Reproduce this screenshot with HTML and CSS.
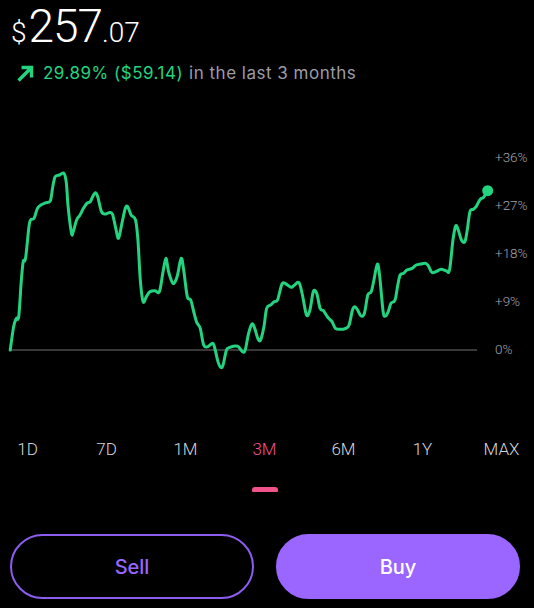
FILE: index.html
```html
<!DOCTYPE html>
<html>
	<head>
		<title>Price chart</title>
		<meta charset="UTF-8"/>
		<link rel="stylesheet" href="styles.css">
	</head>
	<body>
		<div class="price">
			<span class="currency">$</span><span class="whole">257</span><span class="cents">.07</span>
		</div>
		<div class="change">
			<svg class="arrow" width="19" height="19" viewBox="0 0 19 19">
				<path d="M2.5 16.5 L15 4 M5.5 3.5 H15.5 V13.5" fill="none" stroke="#22d47f" stroke-width="3.4"/>
			</svg>
			<span class="gain">29.89% ($59.14)</span>
			<span class="period">in the last 3 months</span>
		</div>
		<div class="chart">
			<svg id="chart" width="534" height="240" viewBox="0 0 534 240">
				<line class="baseline" x1="10" y1="210" x2="477" y2="210"/>
				<text class="axis" x="495" y="18">+36%</text>
				<text class="axis" x="495" y="66">+27%</text>
				<text class="axis" x="495" y="114">+18%</text>
				<text class="axis" x="495" y="162">+9%</text>
				<text class="axis" x="495" y="210">0%</text>
				<path id="line" class="line" d=""/>
				<circle id="dot" class="dot" r="5.5" cx="0" cy="0"/>
			</svg>
		</div>
		<div class="ranges">
			<div class="range">1D</div>
			<div class="range">7D</div>
			<div class="range">1M</div>
			<div class="range active">3M</div>
			<div class="range">6M</div>
			<div class="range">1Y</div>
			<div class="range">MAX</div>
		</div>
		<div class="actions">
			<button class="button sell">Sell</button>
			<button class="button buy">Buy</button>
		</div>
		<script>
			// trace of the line, on a 1568 x 720 grid laid over the chart box
			const trace = [
				[30,630],[40,560],[48,535],[55,530],[62,430],[68,365],[75,355],[85,260],[90,240],[100,235],
				[110,205],[120,195],[135,188],[148,182],[155,140],[162,110],[175,105],[188,100],[195,130],[200,200],
				[210,280],[215,275],[225,240],[235,225],[245,205],[255,190],[265,185],[272,170],[280,158],[287,170],
				[298,215],[310,222],[320,218],[330,222],[340,265],[348,295],[358,250],[368,205],[375,200],[385,225],
				[398,240],[405,300],[412,420],[420,485],[430,470],[440,455],[455,452],[468,455],[478,400],[487,355],
				[495,395],[508,430],[520,410],[532,355],[540,395],[550,470],[560,480],[570,520],[578,548],[588,565],
				[598,615],[610,620],[625,610],[632,630],[640,665],[648,682],[655,675],[665,630],[675,622],[690,618],
				[700,620],[712,635],[720,630],[730,580],[740,552],[748,565],[757,595],[765,600],[775,560],[783,505],
				[795,495],[805,485],[815,480],[828,432],[840,432],[855,442],[865,435],[878,428],[888,465],[900,525],
				[910,510],[920,455],[930,460],[940,505],[950,512],[958,525],[965,535],[975,545],[985,565],[1000,568],
				[1015,565],[1025,555],[1035,510],[1042,500],[1050,510],[1060,528],[1070,520],[1080,465],[1090,455],[1098,420],
				[1108,372],[1115,410],[1125,515],[1132,528],[1140,515],[1148,490],[1160,480],[1168,435],[1175,405],[1185,400],
				[1195,390],[1210,385],[1222,375],[1235,372],[1250,370],[1258,378],[1268,397],[1280,395],[1295,388],[1310,392],
				[1320,390],[1330,300],[1338,258],[1345,268],[1355,300],[1365,305],[1372,270],[1380,215],[1390,208],[1398,200],
				[1410,178],[1420,172],[1432,152]
			];

			function drawLine()
			{
				var sx = 534 / 1568;
				var sy = 240 / 720;
				var points = trace.map(function (p) { return [p[0] * sx, p[1] * sy]; });

				// catmull-rom to cubic bezier
				var d = "M" + points[0][0].toFixed(2) + " " + points[0][1].toFixed(2);
				for (var i = 0; i < points.length - 1; i++)
				{
					var p0 = points[i > 0 ? i - 1 : i];
					var p1 = points[i];
					var p2 = points[i + 1];
					var p3 = points[i + 2 < points.length ? i + 2 : i + 1];
					var c1x = p1[0] + (p2[0] - p0[0]) / 6;
					var c1y = p1[1] + (p2[1] - p0[1]) / 6;
					var c2x = p2[0] - (p3[0] - p1[0]) / 6;
					var c2y = p2[1] - (p3[1] - p1[1]) / 6;
					d += " C" + c1x.toFixed(2) + " " + c1y.toFixed(2) + " " + c2x.toFixed(2) + " " + c2y.toFixed(2) + " " + p2[0].toFixed(2) + " " + p2[1].toFixed(2);
				}
				document.getElementById("line").setAttribute("d", d);

				var last = points[points.length - 1];
				var dot = document.getElementById("dot");
				dot.setAttribute("cx", last[0]);
				dot.setAttribute("cy", last[1]);
			}

			drawLine();
		</script>
	</body>
</html>
```

FILE: styles.css
```css
html, body {
	margin: 0;
	padding: 0;
	background-color: #000;
}

body {
	width: 534px;
	height: 608px;
	overflow: hidden;
	font-family: Roboto, "Liberation Sans", sans-serif;
	color: #fff;
}

.price {
	height: 52px;
	line-height: 52px;
	padding-left: 11px;
	font-weight: 300;
	white-space: nowrap;
}

.currency {
	font-size: 28px;
	margin-right: 2px;
}

.whole {
	font-size: 46px;
	letter-spacing: -1px;
}

.cents {
	font-size: 28px;
}

.change {
	display: flex;
	align-items: center;
	gap: 6px;
	height: 24px;
	margin-top: 9px;
	padding-left: 16px;
	font-family: Inter, Roboto, sans-serif;
	font-size: 17px;
	letter-spacing: 0.5px;
	line-height: 24px;
	white-space: nowrap;
}

.arrow {
	flex: none;
	margin-right: 2px;
}

.gain {
	color: #22d47f;
}

.period {
	color: #9c9ca6;
}

.chart {
	height: 240px;
	margin-top: 55px;
}

.chart svg {
	display: block;
}

.baseline {
	stroke: #4b4b4f;
	stroke-width: 1.5;
}

.axis {
	fill: #a3a3a8;
	font-size: 13.5px;
	font-weight: 300;
	dominant-baseline: middle;
}

.line {
	fill: none;
	stroke: #22d47f;
	stroke-width: 3;
	stroke-linejoin: round;
	stroke-linecap: round;
}

.dot {
	fill: #22d47f;
}

.ranges {
	display: grid;
	grid-template-columns: repeat(7, 1fr);
	margin: 57px -7px 0 -12px;
	height: 55px;
}

.range {
	display: flex;
	flex-direction: column;
	align-items: center;
	gap: 26px;
	font-size: 17px;
	font-weight: 300;
	line-height: 24px;
	color: #d4d4d8;
}

.range.active {
	color: #f0528a;
}

.range.active::after {
	content: "";
	width: 26px;
	height: 5px;
	border-radius: 3px 3px 1px 1px;
	background-color: #f0528a;
}

.actions {
	display: flex;
	gap: 22px;
	margin-top: 42px;
	padding: 0 14px 0 10px;
}

.button {
	flex: 1;
	height: 65px;
	border-radius: 33px;
	font-family: Inter, Roboto, sans-serif;
	font-size: 20px;
	font-weight: 500;
	cursor: pointer;
}

.sell {
	background-color: #000;
	border: 2px solid #8d5cf0;
	color: #9a66ff;
}

.buy {
	background-color: #9b66ff;
	border: 2px solid #9b66ff;
	color: #fff;
}
```
